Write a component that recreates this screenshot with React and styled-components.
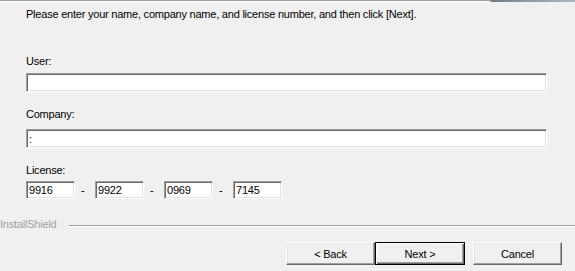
import styled, { createGlobalStyle } from "styled-components"

const GlobalStyle = createGlobalStyle`
	html, body {
		margin: 0;
		padding: 0;
		background: #f0f0f0;
	}
	body {
		font-family: "Liberation Sans", Arial, sans-serif;
		font-size: 11px;
		letter-spacing: -0.22px;
		color: #000;
	}
`

function App() {
	const license = ["9916", "9922", "0969", "7145"]

	return (
		<Dialog>
			<GlobalStyle />
			<TopEdge>
				<EdgeLine />
				<BannerTail />
			</TopEdge>
			<Body>
				<Intro>Please enter your name, company name, and license number, and then click [Next].</Intro>
				<Label $top={34}>User:</Label>
				<TextBox $top={5} defaultValue="" />
				<Label $top={16}>Company:</Label>
				<TextBox $top={8} defaultValue=":" />
				<Label $top={16}>License:</Label>
				<LicenseRow>
					{license.map((part, i) => (
						<LicensePart key={i}>
							{i > 0 && <Dash>-</Dash>}
							<KeyBox defaultValue={part} maxLength={4} />
						</LicensePart>
					))}
				</LicenseRow>
			</Body>
			<Footer>
				<Brand>InstallShield</Brand>
				<Etched />
			</Footer>
			<Buttons>
				<Button>&lt; Back</Button>
				<Button $default>Next &gt;</Button>
				<Button $gap>Cancel</Button>
			</Buttons>
		</Dialog>
	)
}

export default App

const Dialog = styled.div`
	width: 575px;
	height: 271px;
	overflow: hidden;
	display: flex;
	flex-direction: column;
	background: #f0f0f0;
`

const TopEdge = styled.div`
	display: flex;
	height: 2px;
`

const EdgeLine = styled.div`
	flex: 1;
	border-top: 1px solid #a0a0a0;
	border-bottom: 1px solid #ffffff;
`

const BannerTail = styled.div`
	width: 85px;
	background: linear-gradient(90deg, #b8b0c8 0px, #6e7a82 2px, #8c979e 40%, #aab4bb 100%);
`

const Body = styled.div`
	padding: 0 28px 0 26px;
	display: flex;
	flex-direction: column;
`

const Intro = styled.div`
	margin-top: 6px;
	line-height: 13px;
	white-space: nowrap;
`

const Label = styled.div`
	margin-top: ${(p) => p.$top}px;
	line-height: 13px;
`

const sunken = `
	box-sizing: border-box;
	background: #ffffff;
	border: 1px solid;
	border-color: #a0a0a0 #ffffff #ffffff #a0a0a0;
	box-shadow: inset 1px 1px 0 #696969, inset -1px -1px 0 #e3e3e3;
	font-family: "Liberation Sans", Arial, sans-serif;
	font-size: 11px;
	letter-spacing: -0.22px;
	color: #000;
	outline: none;
	margin: 0;
`

const TextBox = styled.input`
	${sunken}
	margin-top: ${(p) => p.$top}px;
	width: 521px;
	height: 19px;
	padding: 0 2px;
`

const LicenseRow = styled.div`
	display: flex;
	margin-top: 4px;
`

const LicensePart = styled.div`
	display: flex;
	align-items: center;
`

const Dash = styled.span`
	box-sizing: border-box;
	width: 20px;
	padding-left: 6px;
	line-height: 18px;
`

const KeyBox = styled.input`
	${sunken}
	width: 49px;
	height: 18px;
	padding: 0 2px;
`

const Footer = styled.div`
	display: flex;
	align-items: center;
	margin-top: 19px;
	height: 13px;
`

const Brand = styled.span`
	color: #a0a0a0;
	line-height: 13px;
	padding-right: 13px;
`

const Etched = styled.div`
	flex: 1;
	height: 0;
	margin-top: 2px;
	border-top: 1px solid #a0a0a0;
	border-bottom: 1px solid #ffffff;
`

const Buttons = styled.div`
	display: flex;
	justify-content: flex-end;
	padding-right: 13px;
	margin-top: 11px;
`

const Button = styled.button`
	box-sizing: border-box;
	width: ${(p) => (p.$default ? 90 : 89)}px;
	height: 23px;
	margin: 0 0 0 ${(p) => (p.$gap ? 8 : 0)}px;
	padding: 0;
	background: #f0f0f0;
	font-family: "Liberation Sans", Arial, sans-serif;
	font-size: 11px;
	letter-spacing: -0.22px;
	color: #000;
	border: 1px solid;
	border-color: ${(p) => (p.$default ? "#000000" : "#ffffff #696969 #696969 #ffffff")};
	box-shadow: ${(p) =>
		p.$default
			? "inset 1px 1px 0 #ffffff, inset -1px -1px 0 #696969, inset -2px -2px 0 #a0a0a0"
			: "inset -1px -1px 0 #a0a0a0, inset 1px 1px 0 #e3e3e3"};
	cursor: default;
	outline: none;
`
